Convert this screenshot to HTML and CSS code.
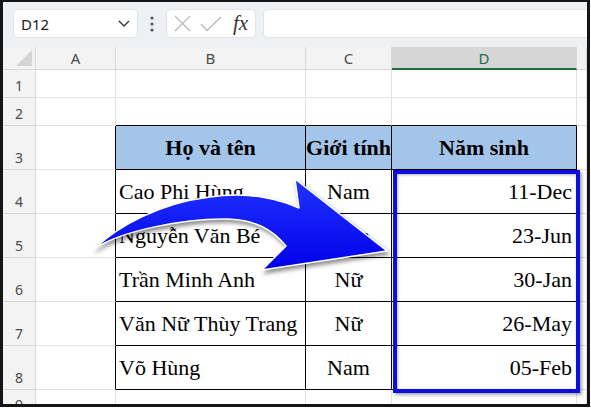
FILE: index.html
```html
<!DOCTYPE html>
<html lang="vi">
<head>
  <meta charset="UTF-8" />
  <title>Năm sinh</title>
  <link rel="stylesheet" href="styles.css">
</head>
<body>
  <div class="frame">
    <!-- thanh công thức -->
    <div class="toolbar">
      <div class="namebox">
        <span>D12</span>
        <svg width="12" height="7" viewBox="0 0 12 7"><path d="M1 1 L6 6 L11 1" fill="none" stroke="#333" stroke-width="1.4"/></svg>
      </div>
      <div class="dots">
        <svg width="4" height="16" viewBox="0 0 4 16"><circle cx="2" cy="2" r="1.6"/><circle cx="2" cy="8" r="1.6"/><circle cx="2" cy="14" r="1.6"/></svg>
      </div>
      <div class="fxbox">
        <svg width="17" height="17" viewBox="0 0 17 17"><path d="M1 1 L16 16 M16 1 L1 16" stroke="#b9b9b9" stroke-width="1.3"/></svg>
        <svg width="22" height="16" viewBox="0 0 22 16"><path d="M1 8 L7 14.5 L21 1" fill="none" stroke="#b9b9b9" stroke-width="1.3"/></svg>
        <span class="fx">fx</span>
      </div>
      <div class="formula"></div>
    </div>

    <!-- bảng tính -->
    <div class="sheet">
      <div class="corner"><span class="tri"></span></div>
      <div class="ch">A</div>
      <div class="ch">B</div>
      <div class="ch">C</div>
      <div class="ch active">D</div>
      <div class="ch"></div>

      <div class="rh">1</div><div class="c"></div><div class="c"></div><div class="c"></div><div class="c"></div><div class="c"></div>
      <div class="rh">2</div><div class="c"></div><div class="c tb-top"></div><div class="c tb-top"></div><div class="c tb-top"></div><div class="c"></div>

      <div class="rh">3</div>
      <div class="c tb-left"></div>
      <div class="c t th">Họ và tên</div>
      <div class="c t th">Giới tính</div>
      <div class="c t th">Năm sinh</div>
      <div class="c"></div>

      <div class="rh">4</div>
      <div class="c tb-left"></div>
      <div class="c t">Cao Phi Hùng</div>
      <div class="c t mid">Nam</div>
      <div class="dates">
        <div class="c t right">11-Dec</div>
        <div class="c t right">23-Jun</div>
        <div class="c t right">30-Jan</div>
        <div class="c t right">26-May</div>
        <div class="c t right">05-Feb</div>
      </div>
      <div class="c"></div>

      <div class="rh">5</div>
      <div class="c tb-left"></div>
      <div class="c t">Nguyễn Văn Bé</div>
      <div class="c t mid">Nam</div>
      <div class="c"></div>

      <div class="rh">6</div>
      <div class="c tb-left"></div>
      <div class="c t">Trần Minh Anh</div>
      <div class="c t mid">Nữ</div>
      <div class="c"></div>

      <div class="rh">7</div>
      <div class="c tb-left"></div>
      <div class="c t">Văn Nữ Thùy Trang</div>
      <div class="c t mid">Nữ</div>
      <div class="c"></div>

      <div class="rh">8</div>
      <div class="c tb-left"></div>
      <div class="c t">Võ Hùng</div>
      <div class="c t mid">Nam</div>
      <div class="c"></div>

      <div class="rh last">9</div><div class="c"></div><div class="c"></div><div class="c"></div><div class="c"></div><div class="c"></div>
    </div>
  </div>

  <!-- mũi tên cong -->
  <svg class="arrow" width="591" height="408" viewBox="0 0 591 408">
    <defs>
      <linearGradient id="blue" x1="0" y1="0" x2="0" y2="1">
        <stop offset="0" stop-color="#2233ff"/>
        <stop offset="1" stop-color="#0000e8"/>
      </linearGradient>
    </defs>
    <path d="M94,249 C118,226 160,203 210,197 C245,192 276,198 299,208 L295,179 L387,251 L262,270 L286,246 C272,229 255,220 228,219 C185,218 120,231 94,249 Z"
          fill="url(#blue)" stroke="#fff" stroke-width="1.5" stroke-linejoin="round"/>
  </svg>
</body>
</html>
```

FILE: styles.css
```css
body {
  margin: 0;
  width: 591px;
  height: 408px;
  overflow: hidden;
  background: #fff;
  position: relative;
}

.frame {
  box-sizing: border-box;
  width: 590px;
  height: 407px;
  border: 3px solid #151515;
  border-top-width: 2px;
  overflow: hidden;
  display: flex;
  flex-direction: column;
  font-family: "Noto Sans", "Open Sans", sans-serif;
}

.toolbar {
  height: 45px;
  flex: none;
  box-sizing: border-box;
  padding: 7px 0 0 10px;
  background: #eef1f4;
  display: flex;
  align-items: flex-start;
}

.namebox,
.fxbox,
.formula {
  height: 29px;
  box-sizing: border-box;
  background: #fff;
  border: 1px solid #e2e4e7;
  border-radius: 5px;
  display: flex;
  align-items: center;
}

.namebox {
  width: 125px;
  padding: 0 7px 0 7px;
  justify-content: space-between;
  font-size: 15px;
  color: #222;
}

.dots {
  width: 28px;
  height: 29px;
  display: flex;
  align-items: center;
  justify-content: center;
}

.dots svg {
  fill: #555;
}

.fxbox {
  width: 90px;
  padding: 0 6px 0 7px;
  gap: 9px;
}

.fx {
  font-family: "Liberation Serif", serif;
  font-style: italic;
  font-size: 21px;
  color: #333;
  margin-left: 2px;
  line-height: 1;
}

.formula {
  flex: 1;
  margin-left: 7px;
  border-right: none;
  border-radius: 5px 0 0 5px;
}

.sheet {
  flex: 1;
  display: grid;
  grid-template-columns: 33px 80px 190px 86px 185px 1fr;
  grid-template-rows: 23px 28px 28px 44px repeat(5, 44px) 1fr;
}

.ch,
.rh,
.corner {
  box-sizing: border-box;
  background: #f3f3f3;
  border-right: 1px solid #d9d9d9;
  border-bottom: 1px solid #d9d9d9;
  color: #4a4a4a;
  display: flex;
  justify-content: center;
}

.ch {
  align-items: center;
  font-size: 15px;
}

.ch.active {
  background: #d6d6d6;
  color: #1e6e42;
  border-bottom: 2px solid #1e6e42;
}

.rh {
  align-items: flex-end;
  font-size: 14px;
  line-height: 18px;
  padding-bottom: 2px;
  overflow: hidden;
}

.rh.last {
  align-items: flex-start;
  padding-top: 6px;
}

.corner {
  position: relative;
}

.tri {
  position: absolute;
  right: 3px;
  bottom: 3px;
  width: 0;
  height: 0;
  border-left: 16px solid transparent;
  border-bottom: 16px solid #d4d4d4;
}

.c {
  box-sizing: border-box;
  border-right: 1px solid #e1e1e1;
  border-bottom: 1px solid #e1e1e1;
}

.tb-top {
  border-bottom-color: #000;
}

.tb-left {
  border-right-color: #000;
}

.t {
  border-right-color: #000;
  border-bottom-color: #000;
  font-family: "Liberation Serif", "Times New Roman", serif;
  font-size: 22px;
  line-height: 24px;
  color: #000;
  display: flex;
  align-items: center;
  padding: 0 3px;
  white-space: nowrap;
}

.th {
  background: #a3c5ea;
  font-weight: bold;
  justify-content: center;
  padding: 0;
}

.mid {
  justify-content: center;
}

.right {
  justify-content: flex-end;
  padding-right: 4px;
}

.dates {
  grid-row: span 5;
  display: grid;
  grid-template-rows: repeat(5, 44px);
  position: relative;
}

.dates::after {
  content: "";
  position: absolute;
  top: 0;
  left: 1px;
  right: -3px;
  bottom: -3px;
  border: 4px solid #0d0ddd;
  box-shadow: 2px 2px 3px rgba(0, 0, 0, 0.35), inset 1px 1px 3px rgba(0, 0, 0, 0.3);
  pointer-events: none;
}

.arrow {
  position: absolute;
  left: 0;
  top: 0;
  filter: drop-shadow(2px 3px 2px rgba(0, 0, 0, 0.45));
}
```
